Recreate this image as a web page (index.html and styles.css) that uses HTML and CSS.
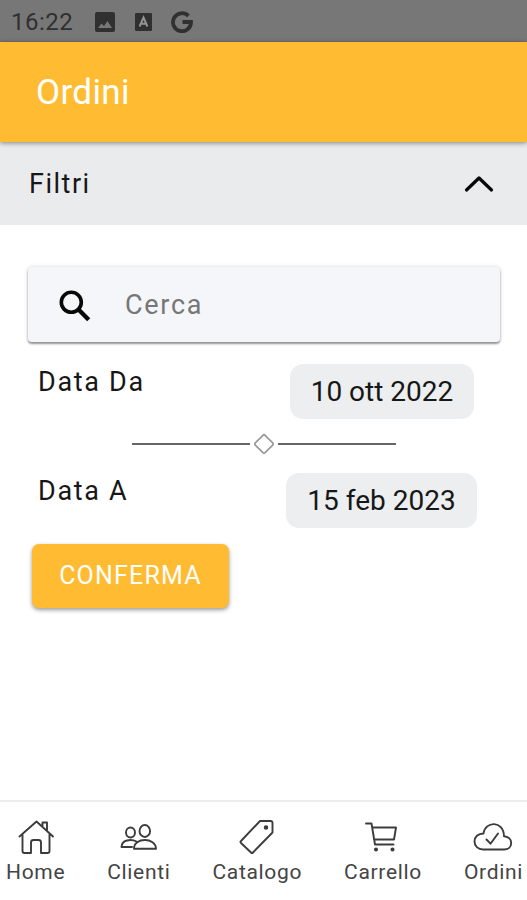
FILE: index.html
```html
<!DOCTYPE html>
<html lang="it">
<head>
<meta charset="utf-8">
<title>Ordini</title>
<link rel="stylesheet" href="styles.css">
</head>
<body>
<div class="status">
  <span class="time">16:22</span>
  <svg class="s-image" width="20" height="20" viewBox="0 0 20 20"><rect width="20" height="20" rx="2" fill="#303030"/><path d="M3 16l3.500-4.500 2.500 2.500 3.500-5 4.500 7z" fill="#777"/></svg>
  <svg class="s-a" width="17" height="18" viewBox="0 0 17 18"><rect width="17" height="18" rx="1" fill="#303030"/><path d="M4.600 13.500L8.500 4.500l3.900 9M6 10.700h5" fill="none" stroke="#949494" stroke-width="1.900"/></svg>
  <svg class="s-g" width="22" height="22" viewBox="0 0 22 22"><path d="M17.400 4.900A9 9 0 1 0 20 11h-8.500" fill="none" stroke="#303030" stroke-width="3.800"/></svg>
</div>
<header class="bar"><h1>Ordini</h1></header>
<div class="filters">
  <span>Filtri</span>
  <svg width="30" height="18" viewBox="0 0 30 18"><path d="M2.500 15L15 3l12.500 12" fill="none" stroke="#080808" stroke-width="3.200" stroke-linecap="round" stroke-linejoin="round"/></svg>
</div>
<main>
  <div class="search">
    <svg width="32" height="32" viewBox="0 0 32 32"><circle cx="12.300" cy="12.300" r="10" fill="none" stroke="#080808" stroke-width="3.600"/><path d="M19.500 19.500L29.700 29.700" stroke="#080808" stroke-width="4.400"/></svg>
    <span>Cerca</span>
  </div>
  <div class="row"><span class="label">Data Da</span><span class="date from">10 ott 2022</span></div>
  <div class="divider"><i></i><svg width="22" height="22" viewBox="0 0 22 22"><rect x="4.100" y="4.100" width="13.800" height="13.800" rx="1.500" transform="rotate(45 11 11)" fill="none" stroke="#999" stroke-width="1.700"/></svg><i></i></div>
  <div class="row"><span class="label">Data A</span><span class="date to">15 feb 2023</span></div>
  <button class="confirm">CONFERMA</button>
</main>
<nav>
  <a><svg width="38" height="36" viewBox="0 0 38 36"><path d="M2.500 17.500L19.500 2.500l16.500 15M5.500 15.500V32q0 2 2 2H14V23.500q0-2.500 2.500-2.500h5q2.500 0 2.500 2.500V34h6.500q2 0 2-2V15.500M25.500 8V3.500H30V12"/></svg><span>Home</span></a>
  <a><svg width="38" height="36" viewBox="0 0 38 36"><ellipse cx="10.500" cy="13.500" rx="4.500" ry="5"/><ellipse cx="24.800" cy="12" rx="5.300" ry="6"/><path d="M14 29.800C13.500 18 36 18 36 29.800ZM12 28H1.500C1.500 21 11 19.500 16.500 22.500"/></svg><span>Clienti</span></a>
  <a><svg width="38" height="36" viewBox="0 0 38 36"><path d="M22 2H32.500Q34.500 2 34.500 4V13.500L15 33.500Q14 34.500 13 33.500L3 24Q2 23 3 22Z"/><circle cx="28" cy="8.500" r="1.300" fill="#444"/></svg><span>Catalogo</span></a>
  <a><svg width="38" height="36" viewBox="0 0 38 36"><path d="M2 4.500H7.500L11 25.500H29.500M8.500 8.500H32L30 20.500H10"/><circle cx="12" cy="30.500" r="1.100" fill="#333"/><circle cx="28.500" cy="30.500" r="1.100" fill="#333"/></svg><span>Carrello</span></a>
  <a><svg width="40" height="36" viewBox="0 0 40 36"><path d="M10 30.500H31C35 30.500 38.200 28 38.200 24S35 17.500 31 17.200C30.500 1 12 2 10.500 14.500C5 14.500 1.500 18 1.500 22.500S5 30.500 10 30.500ZM13.500 20.500L17.500 24.700L25 14.500"/></svg><span>Ordini</span></a>
</nav>
</body>
</html>
```
FILE: styles.css
```css
* { box-sizing: border-box; }
body { margin: 0; height: 900px; display: flex; flex-direction: column; overflow: hidden; background: #fff; color: #171717; font-family: Roboto, sans-serif; }
svg { display: block; flex: none; }
.status { height: 42px; flex: none; display: flex; align-items: center; padding: 2px 0 0 11px; background: #777; color: #303030; }
.time { width: 84px; font-size: 24px; letter-spacing: .5px; }
.s-a { margin-left: 20px; }
.s-g { margin-left: 19px; }
.bar { height: 100px; flex: none; display: flex; align-items: center; padding-left: 36px; background: #ffbc32; box-shadow: 0 1px 5px rgba(0,0,0,.45); position: relative; }
h1 { margin: 0; color: #fff; font-size: 35px; font-weight: 400; letter-spacing: .35px; }
.filters { height: 83px; flex: none; display: flex; align-items: center; justify-content: space-between; padding: 0 33px 0 29px; background: #eaebed; font-size: 27px; letter-spacing: 1.5px; }
main { flex: 1; padding: 42px 27px 0 28px; }
.search { height: 75px; display: flex; align-items: center; gap: 34px; padding: 2px 0 0 31px; border-radius: 4px; background: #f4f6f9; color: #777; font-size: 27px; letter-spacing: 1.7px; box-shadow: 0 2px 2px rgba(0,0,0,.38), 0 0 4px rgba(0,0,0,.16); }
.search span { padding-bottom: 2px; }
.row { height: 55px; display: flex; justify-content: space-between; padding-left: 10px; }
.search + .row { margin-top: 22px; }
.label { padding-top: 3px; font-size: 27px; line-height: 30px; letter-spacing: 1.7px; }
.date { height: 55px; border-radius: 13px; background: #eceeef; font-size: 28px; line-height: 56px; text-align: center; }
.from { width: 184px; margin-right: 26px; }
.to { width: 191px; margin-right: 23px; }
.divider { height: 54px; display: flex; justify-content: center; align-items: center; gap: 3px; padding-bottom: 4px; }
.divider i { width: 118px; height: 2px; background: #666; }
.confirm { display: block; width: 197px; height: 64px; margin: 16px 0 0 4px; padding: 0 0 2px; border: 0; border-radius: 7px; background: #ffbc32; color: #fff; font: 25px Roboto, sans-serif; letter-spacing: 1.2px; box-shadow: 0 2px 4px rgba(0,0,0,.4); }
nav { height: 100px; flex: none; display: flex; gap: 42px; padding: 17px 0 0 6px; border-top: 2px solid #ececec; color: #444; font-size: 21px; letter-spacing: .67px; }
nav a { display: flex; flex: none; flex-direction: column; align-items: center; line-height: 35px; }
nav svg { fill: none; stroke: #3c3c3c; stroke-width: 1.900; stroke-linejoin: round; stroke-linecap: round; }
```
